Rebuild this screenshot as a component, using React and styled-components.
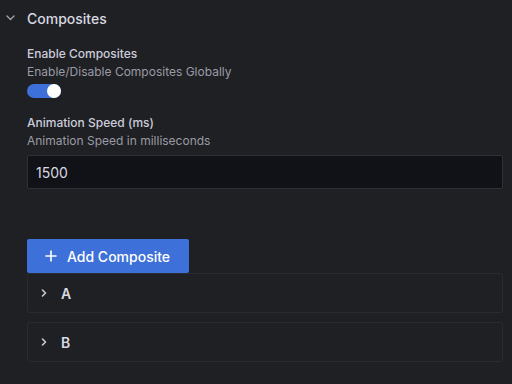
import React, { useState } from "react";
import styled, { createGlobalStyle } from "styled-components";

const GlobalStyle = createGlobalStyle`
  html, body {
    margin: 0;
    padding: 0;
    background: #1f2023;
  }
  body {
    font-family: Inter, "Noto Sans", sans-serif;
    color: #ccccdc;
    -webkit-font-smoothing: antialiased;
  }
`;

const Page = styled.div`
  width: 512px;
  height: 384px;
  overflow: hidden;
  box-sizing: border-box;
  padding: 8px 10px 0 6px;
`;

const SectionHeader = styled.div`
  display: flex;
  align-items: center;
  height: 20px;
  gap: 12px;
  margin-bottom: 17px;
  svg {
    color: #9fa0a9;
  }
`;

const SectionTitle = styled.div`
  font-size: 14px;
  font-weight: 500;
  color: #d8d9e2;
`;

const Body = styled.div`
  padding-left: 21px;
  display: flex;
  flex-direction: column;
`;

const Field = styled.div`
  display: flex;
  flex-direction: column;
  margin-bottom: ${(p) => p.$mb || 0}px;
`;

const Label = styled.div`
  font-size: 12px;
  font-weight: 500;
  line-height: 18px;
  color: #ccccdc;
`;

const Description = styled.div`
  font-size: 12px;
  line-height: 18px;
  color: #9a9ba6;
  margin-bottom: 3px;
`;

const SwitchTrack = styled.button`
  width: 34px;
  height: 14px;
  border-radius: 8px;
  border: none;
  padding: 0;
  background: ${(p) => (p.$on ? "#3d71d9" : "#2d2e34")};
  position: relative;
  cursor: pointer;
  &::after {
    content: "";
    position: absolute;
    top: 0px;
    left: ${(p) => (p.$on ? "20px" : "1px")};
    width: 14px;
    height: 14px;
    border-radius: 50%;
    background: #ffffff;
  }
`;

const Input = styled.input`
  box-sizing: border-box;
  width: 476px;
  height: 34px;
  margin-top: 2px;
  background: #111217;
  border: 1px solid #2e3036;
  border-radius: 2px;
  color: #d8d9e2;
  font-family: inherit;
  font-size: 14px;
  padding: 0 8px;
  outline: none;
`;

const AddButton = styled.button`
  display: flex;
  align-items: center;
  gap: 10px;
  height: 34px;
  width: 162px;
  padding: 0 0 0 18px;
  border: none;
  border-radius: 2px;
  background: #3d71d9;
  color: #ffffff;
  font-family: inherit;
  font-size: 14px;
  font-weight: 500;
  cursor: pointer;
`;

const ItemList = styled.div`
  display: flex;
  flex-direction: column;
  gap: 9px;
`;

const Item = styled.div`
  box-sizing: border-box;
  width: 476px;
  height: 40px;
  border: 1px solid #2a2b30;
  border-radius: 3px;
  display: flex;
  align-items: center;
  padding-left: 13px;
  gap: 14px;
  svg {
    color: #c8c9d2;
  }
`;

const ItemName = styled.span`
  font-size: 14px;
  font-weight: 600;
  color: #d8d9e2;
`;

const ChevronDown = () => (
  <svg width="9" height="6" viewBox="0 0 9 6" fill="none" stroke="currentColor" strokeWidth="1.4" strokeLinecap="round" strokeLinejoin="round">
    <path d="M1 1l3.5 3.5L8 1" />
  </svg>
);

const ChevronRight = () => (
  <svg width="6" height="8" viewBox="0 0 6 8" fill="none" stroke="currentColor" strokeWidth="1.6" strokeLinecap="round" strokeLinejoin="round">
    <path d="M1.5 1l3 3-3 3" />
  </svg>
);

const Plus = () => (
  <svg width="12" height="12" viewBox="0 0 12 12" fill="none" stroke="currentColor" strokeWidth="1.6" strokeLinecap="round">
    <path d="M6 1v10M1 6h10" />
  </svg>
);

export default function App() {
  const [enabled, setEnabled] = useState(true);
  const [speed, setSpeed] = useState("1500");
  const composites = ["A", "B"];

  return (
    <>
      <GlobalStyle />
      <Page>
        <SectionHeader>
          <ChevronDown />
          <SectionTitle>Composites</SectionTitle>
        </SectionHeader>
        <Body>
          <Field $mb={16}>
            <Label>Enable Composites</Label>
            <Description>Enable/Disable Composites Globally</Description>
            <SwitchTrack $on={enabled} onClick={() => setEnabled(!enabled)} />
          </Field>
          <Field $mb={50}>
            <Label>Animation Speed (ms)</Label>
            <Description>Animation Speed in milliseconds</Description>
            <Input value={speed} onChange={(e) => setSpeed(e.target.value)} />
          </Field>
          <AddButton>
            <Plus />
            Add Composite
          </AddButton>
          <ItemList>
            {composites.map((name) => (
              <Item key={name}>
                <ChevronRight />
                <ItemName>{name}</ItemName>
              </Item>
            ))}
          </ItemList>
        </Body>
      </Page>
    </>
  );
}
